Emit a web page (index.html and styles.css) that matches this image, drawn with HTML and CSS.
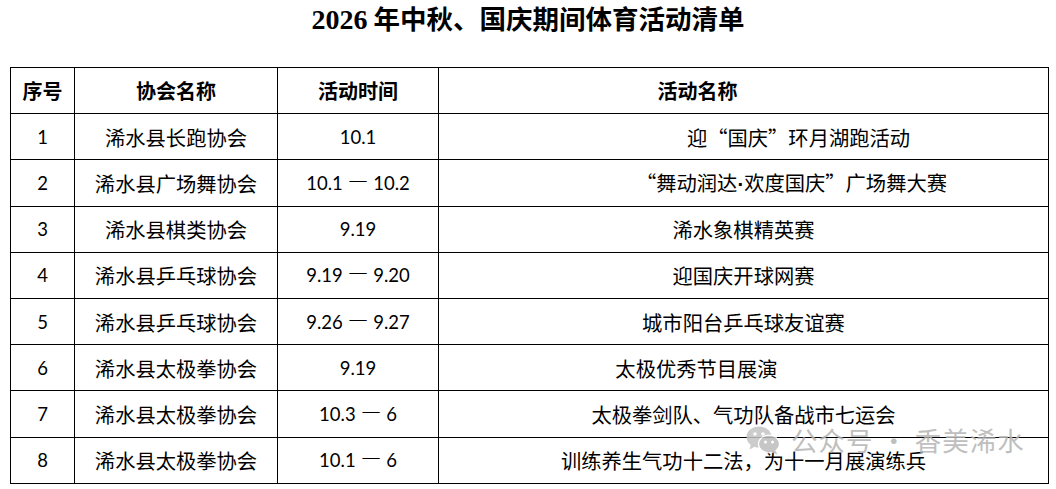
FILE: index.html
```html
<!DOCTYPE html>
<html lang="zh-CN">
<head>
<meta charset="utf-8">
<link rel="stylesheet" href="styles.css">
</head>
<body>
<div class="page">
  <h1 class="title"><span class="num">2026</span> 年中秋、国庆期间体育活动清单</h1>
  <table class="list">
    <colgroup>
      <col class="c1"><col class="c2"><col class="c3"><col class="c4">
    </colgroup>
    <thead>
      <tr><th>序号</th><th>协会名称</th><th>活动时间</th><th class="sl">活动名称</th></tr>
    </thead>
    <tbody>
      <tr><td class="num">1</td><td>浠水县长跑协会</td><td class="num">10.1</td><td class="sr1">迎“国庆”环月湖跑活动</td></tr>
      <tr><td class="num">2</td><td>浠水县广场舞协会</td><td class="num">10.1 <span class="dash">一</span> 10.2</td><td class="sr2">“舞动润达<span class="mid">·</span>欢度国庆”广场舞大赛</td></tr>
      <tr><td class="num">3</td><td>浠水县棋类协会</td><td class="num">9.19</td><td>浠水象棋精英赛</td></tr>
      <tr><td class="num">4</td><td>浠水县乒乓球协会</td><td class="num">9.19 <span class="dash">一</span> 9.20</td><td>迎国庆开球网赛</td></tr>
      <tr><td class="num">5</td><td>浠水县乒乓球协会</td><td class="num">9.26 <span class="dash">一</span> 9.27</td><td>城市阳台乒乓球友谊赛</td></tr>
      <tr><td class="num">6</td><td>浠水县太极拳协会</td><td class="num">9.19</td><td class="sl2">太极优秀节目展演</td></tr>
      <tr><td class="num">7</td><td>浠水县太极拳协会</td><td class="num">10.3 <span class="dash">一</span> 6</td><td>太极拳剑队、气功队备战市七运会</td></tr>
      <tr><td class="num">8</td><td>浠水县太极拳协会</td><td class="num">10.1 <span class="dash">一</span> 6</td><td>训练养生气功十二法，为十一月展演练兵</td></tr>
    </tbody>
  </table>
  <div class="watermark">
    <svg class="wm-icon" viewBox="0 0 34 30" width="34" height="30">
      <ellipse cx="13" cy="12" rx="12.5" ry="10.5" fill="#c4c4c4"/>
      <path d="M5 19 L3.5 24.5 L10 21 Z" fill="#c4c4c4"/>
      <circle cx="9" cy="9" r="1.8" fill="#fff"/>
      <circle cx="17" cy="9" r="1.8" fill="#fff"/>
      <ellipse cx="23" cy="19" rx="10.5" ry="8.8" fill="#bdbdbd" stroke="#fff" stroke-width="1.2"/>
      <path d="M29 25 L31.5 29.5 L25 27 Z" fill="#bdbdbd"/>
      <circle cx="19.5" cy="17" r="1.5" fill="#fff"/>
      <circle cx="26.5" cy="17" r="1.5" fill="#fff"/>
    </svg>
    <span class="wm-text">公众号 · 香美浠水</span>
  </div>
</div>
</body>
</html>
```

FILE: styles.css
```css
html, body {
  margin: 0;
  padding: 0;
  background: #fff;
}

.page {
  position: relative;
  width: 1056px;
  height: 489px;
  overflow: hidden;
  font-family: "Noto Sans CJK SC", "Noto Sans", sans-serif;
  color: #000;
}

.title {
  margin: 0 0 29px;
  text-align: center;
  font-size: 26.5px;
  line-height: 36px;
  font-weight: 700;
}

.title .num {
  font-family: "Liberation Serif", serif;
  font-size: 28px;
  line-height: 36px;
}

.list {
  margin-left: 10px;
  width: 1038px;
  border-collapse: collapse;
  table-layout: fixed;
}

.c1 { width: 64px; }
.c2 { width: 203px; }
.c3 { width: 161px; }
.c4 { width: 610px; }

.list th,
.list td {
  border: 1.5px solid #000;
  height: 45.2px;
  padding: 0;
  text-align: center;
  vertical-align: middle;
  font-size: 20.3px;
  line-height: 24px;
  font-weight: 400;
  white-space: nowrap;
}

.list th {
  font-weight: 700;
  font-size: 20px;
}

.list td.num {
  font-family: "Lato", "Liberation Sans", sans-serif;
  font-size: 18.5px;
}

.list .dash {
  display: inline-block;
  font-family: "Noto Sans CJK SC", sans-serif;
  font-size: 19px;
  font-weight: 300;
  line-height: 1;
  vertical-align: 1px;
  margin: 0 1px;
}

.list .mid {
  font-family: "Liberation Sans", sans-serif;
  font-weight: 700;
}

.list th.sl { padding-right: 92px; }
.list td.sr1 { padding-left: 110px; }
.list td.sr2 { padding-left: 96px; }
.list td.sl2 { padding-right: 94px; }

.watermark {
  position: absolute;
  left: 746px;
  top: 424px;
  display: flex;
  align-items: center;
  gap: 11px;
  opacity: 0.85;
}

.wm-icon {
  display: block;
}

.wm-text {
  font-family: "Noto Sans CJK SC", sans-serif;
  font-size: 26.5px;
  line-height: 32px;
  color: #b4b4b4;
  letter-spacing: 1px;
}
```
